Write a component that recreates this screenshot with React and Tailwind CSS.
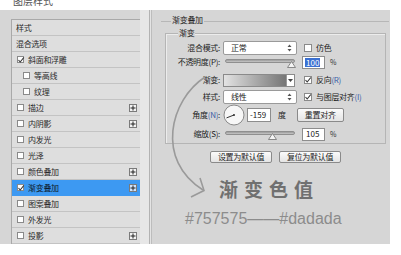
import React from "react";

const F = { fontFamily: '"Noto Sans CJK SC", "Noto Sans", sans-serif' };

function Box({ checked, className = "" }) {
  return (
    <span className={"relative inline-block w-[7px] h-[7px] border border-[#8a8a8a] bg-white shrink-0 " + className}>
      {checked && (
        <svg className="absolute -left-[1px] -top-[1px]" width="8" height="8" viewBox="0 0 8 8">
          <path d="M1.5 4 L3.2 6 L6.8 1.5" stroke="#333" strokeWidth="1.1" fill="none" />
        </svg>
      )}
    </span>
  );
}

function Plus({ sel }) {
  return (
    <span className={"ml-auto mr-[3px] w-[8px] h-[8px] border border-[#7a7a7a] flex items-center justify-center " + (sel ? "bg-[#cfe3fb]" : "bg-[#f2f2f2]")}>
      <svg width="6" height="6" viewBox="0 0 6 6">
        <path d="M3 0.5 V5.5 M0.5 3 H5.5" stroke="#222" strokeWidth="1" />
      </svg>
    </span>
  );
}

const rows = [
  { t: "样式", type: "plain" },
  { t: "混合选项", type: "plain" },
  { t: "斜面和浮雕", type: "cb", c: true },
  { t: "等高线", type: "sub" },
  { t: "纹理", type: "sub" },
  { t: "描边", type: "cb", plus: true },
  { t: "内阴影", type: "cb", plus: true },
  { t: "内发光", type: "cb" },
  { t: "光泽", type: "cb" },
  { t: "颜色叠加", type: "cb", plus: true },
  { t: "渐变叠加", type: "cb", plus: true, c: true, sel: true },
  { t: "图案叠加", type: "cb" },
  { t: "外发光", type: "cb" },
  { t: "投影", type: "cb", plus: true },
];

function UpDown() {
  return (
    <svg width="5" height="8" viewBox="0 0 5 8" className="ml-auto mr-[4px]">
      <path d="M2.5 0.5 L4.5 3 H0.5 Z M2.5 7.5 L4.5 5 H0.5 Z" fill="#555" />
    </svg>
  );
}

function Select({ text }) {
  return (
    <div className="w-[74px] h-[14px] bg-white border border-[#9a9a9a] rounded-[2px] flex items-center pl-[7px] text-[8px] tracking-[-0.3px] leading-none text-[#222]">
      <span>{text}</span>
      <UpDown />
    </div>
  );
}

function Slider({ pos }) {
  return (
    <div className="relative w-[70px] h-[14px] ml-[2px]">
      <div className="absolute left-0 right-0 top-[4px] h-[4px] rounded-full bg-gradient-to-b from-[#9a9a9a] to-[#c8c8c8] border border-[#8f8f8f]" />
      <svg className="absolute top-[6px]" style={{ left: pos }} width="9" height="7" viewBox="0 0 9 7">
        <path d="M4.5 0.5 L8.5 6.5 H0.5 Z" fill="#f4f4f4" stroke="#7d7d7d" strokeWidth="0.9" />
      </svg>
    </div>
  );
}

function Label({ children }) {
  return <div className="w-[57px] text-right pr-[3px] text-[8px] tracking-[-0.3px] leading-none text-[#222] whitespace-nowrap">{children}</div>;
}

const small = "text-[8px] tracking-[-0.3px] leading-none text-[#222]";

export default function App() {
  return (
    <div className="relative w-[401px] h-[255px] bg-white overflow-hidden" style={F}>
      <div className="h-[10px] pl-[13px] overflow-hidden">
        <div className="-mt-[5px] text-[10px] leading-[12px] text-[#555]">图层样式</div>
      </div>
      <div className="w-[390px] h-[234px] bg-[#d6d6d6] flex">
        {/* left list */}
        <div className="pl-[11px] pt-[9px] flex">
          <div className="w-[129px] border-l border-t border-[#a9a9a9] bg-[#dedede] flex flex-col">
            {rows.map((r, i) => (
              <div
                key={i}
                className={
                  "h-[16px] shrink-0 border-b flex items-center text-[8px] tracking-[-0.3px] leading-none " +
                  (r.sel ? "bg-[#3d99f2] border-[#3d99f2] text-[#0d1a2a]" : "border-[#c3c3c3] text-[#2a2a2a]")
                }
              >
                {r.type === "plain" && <span className="pl-[4px]">{r.t}</span>}
                {r.type === "cb" && (
                  <>
                    <Box checked={r.c} className="ml-[5px] mr-[4px]" />
                    <span>{r.t}</span>
                  </>
                )}
                {r.type === "sub" && (
                  <>
                    <Box className="ml-[11px] mr-[4px]" />
                    <span>{r.t}</span>
                  </>
                )}
                {r.plus && <Plus sel={r.sel} />}
              </div>
            ))}
          </div>
        </div>
        {/* separator strip */}
        <div className="w-[9px] bg-[#e7e7e7]" />
        <div className="w-[1px] bg-[#b3b3b3]" />
        <div className="w-[1px] bg-[#e4e4e4]" />
        <div className="w-[1px] bg-[#bdbdbd]" />
        {/* right panel */}
        <div className="flex-1 flex flex-col pl-[9px]">
          <div className="h-[11px]" />
          <div className="relative h-[1px] bg-[#b7b7b7] w-[228px]">
            <span className={"absolute left-[10px] -top-[5px] px-[1px] bg-[#d6d6d6] " + small}>渐变叠加</span>
          </div>
          <div className="pl-[4px] pr-[3px] mt-[11px]">
            <div className="relative border border-[#b5b5b5] shadow-[inset_1px_1px_0_#ececec] w-[221px] pt-[7px] pb-[2px]">
              <span className={"absolute left-[12px] -top-[5px] px-[1px] bg-[#d6d6d6] " + small}>渐变</span>
              {/* row 1 */}
              <div className="flex items-center h-[14px]">
                <Label>混合模式:</Label>
                <Select text="正常" />
                <Box className="ml-[7px] mr-[4px] w-[8px] h-[8px]" />
                <span className={small}>仿色</span>
              </div>
              {/* row 2 */}
              <div className="flex items-center h-[14px]">
                <Label>不透明度(P):</Label>
                <Slider pos="62px" />
                <div className="ml-[7px] w-[23px] h-[13px] bg-white border border-[#8d8d8d] flex items-center pl-[2px]">
                  <span className="bg-[#3a6fd1] text-white text-[8px] leading-[9px] px-[1px]">100</span>
                </div>
                <span className="ml-[5px] text-[7px] leading-none text-[#333]">%</span>
              </div>
              {/* row 3 */}
              <div className="flex items-center h-[14px] mt-[4px]">
                <Label>渐变:</Label>
                <div className="w-[72px] h-[13px] border border-[#8a8a8a] flex">
                  <div className="flex-1 bg-gradient-to-r from-[#e3e3e3] to-[#767676]" />
                  <div className="w-[8px] bg-white border-l border-[#9a9a9a] flex items-center justify-center">
                    <svg width="5" height="3" viewBox="0 0 5 3"><path d="M0 0 H5 L2.5 3 Z" fill="#444" /></svg>
                  </div>
                </div>
                <Box checked className="ml-[9px] mr-[4px] w-[8px] h-[8px]" />
                <span className={small}>反向<span className="text-[#3b5fa8]">(R)</span></span>
              </div>
              {/* row 4 */}
              <div className="flex items-center h-[14px] mt-[3px]">
                <Label>样式:</Label>
                <Select text="线性" />
                <Box checked className="ml-[7px] mr-[4px] w-[8px] h-[8px]" />
                <span className={small}>与图层对齐<span className="text-[#3b5fa8]">(I)</span></span>
              </div>
              {/* row 5 */}
              <div className="flex items-center h-[22px]">
                <Label>角度<span className="text-[#3b5fa8]">(N)</span>:</Label>
                <svg width="22" height="22" viewBox="0 0 22 22">
                  <circle cx="11" cy="11" r="10" fill="#f7f7f7" stroke="#8a8a8a" strokeWidth="1" />
                  <path d="M11 11 L3.5 13.9" stroke="#333" strokeWidth="1" />
                  <circle cx="11" cy="11" r="1" fill="#333" />
                </svg>
                <div className="ml-[2px] w-[24px] h-[14px] bg-white border border-[#8d8d8d] flex items-center pl-[2px] text-[8px] leading-none text-[#222]">-159</div>
                <span className={"ml-[7px] " + small}>度</span>
                <div className={"ml-[11px] w-[47px] h-[14px] border border-[#8a8a8a] rounded-[2px] bg-gradient-to-b from-[#fbfbfb] to-[#e4e4e4] flex items-center justify-center " + small}>重置对齐</div>
              </div>
              {/* row 6 */}
              <div className="flex items-center h-[14px] mt-[1px]">
                <Label>缩放(S):</Label>
                <Slider pos="43px" />
                <div className="ml-[7px] w-[23px] h-[13px] bg-white border border-[#8d8d8d] flex items-center pl-[3px] text-[8px] leading-none text-[#222]">105</div>
                <span className="ml-[5px] text-[7px] leading-none text-[#333]">%</span>
              </div>
            </div>
          </div>
          {/* buttons */}
          <div className="flex mt-[7px] pl-[49px] gap-[7px]">
            <div className={"w-[62px] h-[12px] border border-[#8a8a8a] rounded-[2px] bg-gradient-to-b from-[#fbfbfb] to-[#e4e4e4] flex items-center justify-center " + small}>设置为默认值</div>
            <div className={"w-[62px] h-[12px] border border-[#8a8a8a] rounded-[2px] bg-gradient-to-b from-[#fbfbfb] to-[#e4e4e4] flex items-center justify-center " + small}>复位为默认值</div>
          </div>
          {/* annotation */}
          <div className="mt-[14px] pl-[58px] text-[19px] leading-[24px] tracking-[6px] text-[#707070] font-bold">渐变色值</div>
          <div className="mt-[9px] pl-[24px] text-[16px] leading-[18px] text-[#8c8c8c]" style={{ fontFamily: '"Liberation Sans", Arial, sans-serif' }}>#757575——#dadada</div>
        </div>
      </div>
      {/* arrow annotation */}
      <svg className="absolute inset-0 pointer-events-none" width="401" height="255" viewBox="0 0 401 255">
        <path d="M205 77 C 170 100, 155 160, 203 190" stroke="#9a9a9a" strokeWidth="1.6" fill="none" />
        <path d="M200 178 L204 190.5 L191 197" stroke="#9a9a9a" strokeWidth="1.6" fill="none" />
      </svg>
    </div>
  );
}
